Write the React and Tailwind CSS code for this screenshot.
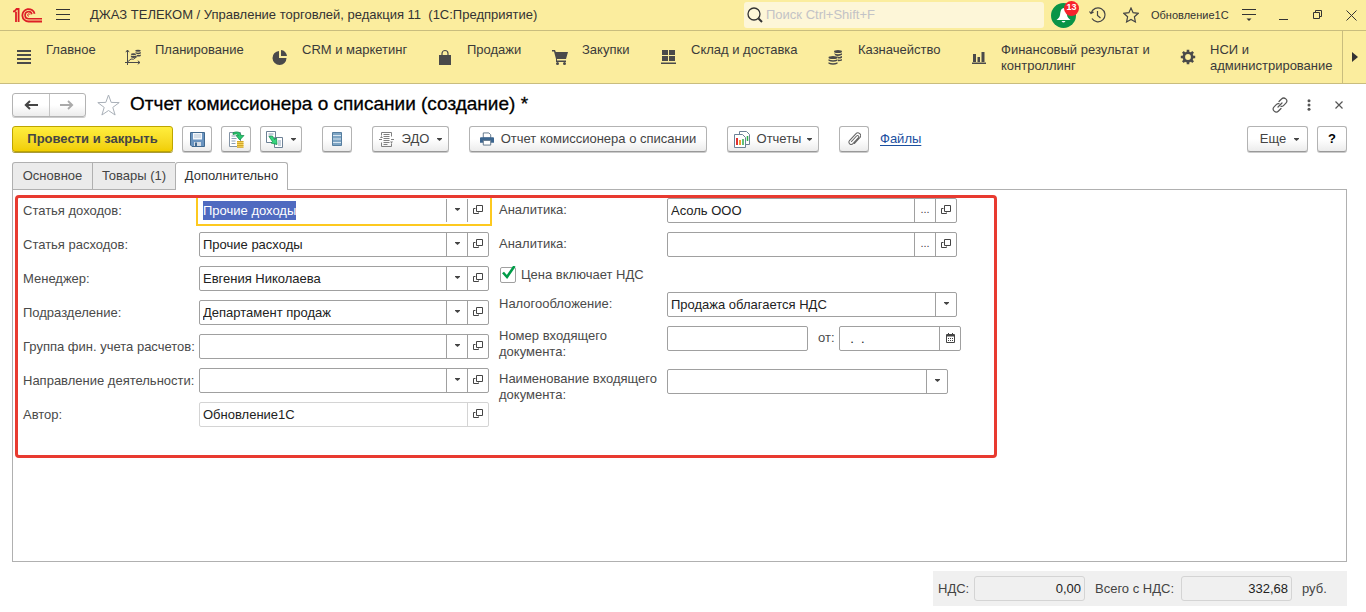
import { useEffect, useRef } from 'react'
import { clsx } from 'clsx'

const NAV = [
  { label: 'Главное', icon: 'list', width: 'w-[109px]' },
  { label: 'Планирование', icon: 'plan', width: 'w-[147px]' },
  { label: 'CRM и маркетинг', icon: 'pie', width: 'w-[165px]' },
  { label: 'Продажи', icon: 'bag', width: 'w-[115px]' },
  { label: 'Закупки', icon: 'cart', width: 'w-[109px]' },
  { label: 'Склад и доставка', icon: 'boxes', width: 'w-[167px]' },
  { label: 'Казначейство', icon: 'coins', width: 'w-[143px]' },
  { label: 'Финансовый результат и контроллинг', icon: 'bars', width: 'w-[209px]' },
  { label: 'НСИ и администрирование', icon: 'gear', width: 'w-[161px]' },
]

const NAV_ICONS = {
  list: <path d="M1 2h14M1 6h14M1 10h14M1 14h14" stroke="currentColor" strokeWidth="2" />,
  plan: (
    <g>
      <path
        d="M2.500 1v15M0 13.500h15M.8 3.200 2.500 1l1.700 2.200M12.800 11.800l2.200 1.700-2.200 1.700M3 12.500l3-2.500 2.500.2L12 7.500"
        stroke="currentColor"
        fill="none"
      />
      <g fill="currentColor">
        <ellipse cx="8.500" cy="5.200" rx="2.600" ry="1" />
        <path d="M5.900 6.400q2.600 1.400 5.200 0v1.800q-2.600 1.400-5.200 0Z" />
        <ellipse cx="13" cy="1.800" rx="2.800" ry="1" />
        <path d="M10.200 3q2.800 1.400 5.600 0v1.500q-2.300 1.200-4.500.2ZM11.700 5.800q2.200.6 4.100-.3v1.400q-2.200 1-4.100.4Z" />
      </g>
    </g>
  ),
  pie: (
    <g fill="currentColor">
      <path d="M7 2v7h7.500A7 7 0 1 1 7 2Z" />
      <path d="M9 1a6.500 6.500 0 0 1 6 6H9Z" />
    </g>
  ),
  bag: (
    <g>
      <path d="M2 6h12v10H2Z" fill="currentColor" />
      <path d="M5 8V4.500a3 3 0 0 1 6 0V8" fill="none" stroke="currentColor" strokeWidth="1.200" />
    </g>
  ),
  cart: (
    <g fill="currentColor">
      <path d="M0 1h3l.8 2H16l-2 7H5v1.500h9V13H4V10L2 2.500H0Z" />
      <circle cx="5.500" cy="14.500" r="1.500" />
      <circle cx="12.500" cy="14.500" r="1.500" />
    </g>
  ),
  boxes: <path d="M1 1h6v5H1ZM8 1h6v5H8ZM1 7h6v5H1ZM8 7h6v5H8ZM0 13.500h15V15H0Z" fill="currentColor" />,
  coins: (
    <g fill="currentColor">
      <ellipse cx="10" cy="2.500" rx="4" ry="1.500" />
      <path d="M6 4.200q4 2 8 0v1.600q-4 2-6.500.8ZM9 7.500q3 1 5-.4v1.600q-2 1.200-4 .8ZM10 10.600q3 .4 4-.6v1.500q-2 1-4 .8Z" />
      <ellipse cx="5" cy="8.500" rx="4.500" ry="1.500" />
      <path d="M.5 10.200q4.500 2 9 0v1.600q-4.500 2-9 0ZM.5 13.200q4.500 2 9 0v1.600q-4.500 2-9 0Z" />
    </g>
  ),
  bars: <path d="M2 5h3v8H2ZM6.500 8h2.500v5H6.500ZM10.500 3h3v10h-3ZM1 13.500h14V15H1Z" fill="currentColor" />,
  gear: (
    <g fill="none" stroke="currentColor">
      <circle cx="8" cy="8" r="4.200" strokeWidth="2.600" />
      <path
        d="M8 .8v2.700M8 12.500v2.700M.8 8h2.700M12.500 8h2.700M2.900 2.900l1.900 1.900M11.200 11.200l1.900 1.900M2.900 13.100l1.900-1.900M11.200 4.800l1.900-1.900"
        strokeWidth="2.600"
      />
    </g>
  ),
}

function Caret() {
  return (
    <svg width="5" height="3" viewBox="0 0 5 3" className="shrink-0">
      <path d="M0 0h5v.8L2.500 3 0 .8Z" fill="#444" />
    </svg>
  )
}

function OpenIcon() {
  return (
    <svg width="10" height="10" viewBox="0 0 10 10" fill="none" stroke="#444">
      <path d="M3.500.5h6v6h-6ZM2.500 3.500h-2v5h5V7.500" />
    </svg>
  )
}

function Logo() {
  return (
    <svg width="29" height="15" viewBox="0 0 29 15" fill="none" stroke="#dd1f26" strokeWidth="1.800" aria-label="1С">
      <path d="M0 3.400h1.500L3.600 1h2v13M3 3.800V14" />
      <path d="M21.600 5.800A6.200 6.200 0 1 0 15.600 13.500H29" />
      <path d="M18.900 6.200a3.500 3.500 0 1 0-3.300 4.500H29" strokeWidth="1.600" />
      <path d="M17 6.700a1.200 1.200 0 1 0-1.200 1.500" strokeWidth="1" />
    </svg>
  )
}

function TitleBar() {
  return (
    <header className="flex h-[31px] items-center border-b border-[#c9bd7e] pl-[13px] pr-[9px] text-[#333]">
      <Logo />
      <button aria-label="Меню" className="ml-[14px]">
        <svg width="14" height="12" viewBox="0 0 14 12" stroke="#333" strokeWidth="1">
          <path d="M0 .5h14M0 5.500h14M0 10.500h14" />
        </svg>
      </button>
      <h1 className="ml-5 whitespace-pre">
        ДЖАЗ ТЕЛЕКОМ / Управление торговлей, редакция 11  (1С:Предприятие)
      </h1>
      <label className="ml-auto flex h-[26px] w-[300px] items-center gap-[3px] rounded-[3px] bg-[#fdf6d8] pl-[3px]">
        <svg width="16" height="16" viewBox="0 0 16 16" fill="none" stroke="#333">
          <circle cx="7" cy="7" r="6" strokeWidth="1.300" />
          <path d="m11.500 11.500 3.500 3.500" strokeWidth="2" />
        </svg>
        <input
          aria-label="Поиск"
          placeholder="Поиск Ctrl+Shift+F"
          className="min-w-0 flex-1 bg-transparent outline-none placeholder:text-[#c3c3c6]"
        />
      </label>
      <button aria-label="Уведомления" className="relative ml-[7px] grid size-[25px] place-items-center rounded-full bg-[#0a9447]">
        <svg width="15" height="17" viewBox="0 0 15 17" fill="#fff">
          <path d="M7.500 1C4.500 2 4.500 5 4 8c-.4 2.500-2 3.500-3.500 5h14C13 11.500 11.400 10.500 11 8c-.5-3-.5-6-3.500-7ZM5.500 14h4q-2 3-4 0Z" />
        </svg>
        <span className="absolute -right-[3px] -top-[2px] grid size-[15px] place-items-center rounded-full bg-[#f7222c] text-[9px] font-bold text-white">
          13
        </span>
      </button>
      <button aria-label="История" className="ml-[13px]">
        <svg width="17" height="16" viewBox="0 0 17 16" fill="none" stroke="#444" strokeWidth="1.200">
          <path d="M2.200 6A7 7 0 1 1 3 11.500M.5 4.500l1.500 2L4.600 5M8.500 4v4.500l3 2.500" />
        </svg>
      </button>
      <button aria-label="Избранное" className="ml-[17px]">
        <svg width="16" height="16" viewBox="0 0 16 16" fill="none" stroke="#444" strokeWidth="1.200">
          <path d="m8 1 2.100 4.700 5.100.6-3.800 3.500 1 5.100L8 12.400l-4.400 2.500 1-5.100L.8 6.300l5.100-.6Z" />
        </svg>
      </button>
      <span className="ml-3 w-[77px] whitespace-nowrap text-[11px]">Обновление1С</span>
      <button aria-label="Настройка" className="ml-[14px]">
        <svg width="14" height="12" viewBox="0 0 14 12" fill="none" stroke="#333">
          <path d="M0 .5h14M0 5.500h14" />
          <path d="M4.500 9.500h5L7 12Z" fill="#333" stroke="none" />
        </svg>
      </button>
      <button aria-label="Свернуть" className="ml-[23px]">
        <svg width="10" height="10" viewBox="0 0 10 10" stroke="#333">
          <path d="M0 9.500h9" />
        </svg>
      </button>
      <button aria-label="Развернуть" className="ml-6">
        <svg width="10" height="10" viewBox="0 0 10 10" fill="none" stroke="#333">
          <path d="M.5 2.500h6v6h-6ZM2.500 2V.5h6v6H7" />
        </svg>
      </button>
      <button aria-label="Закрыть" className="ml-[23px]">
        <svg width="11" height="11" viewBox="0 0 11 11" stroke="#333">
          <path d="m.5.5 10 10M10.500.5l-10 10" />
        </svg>
      </button>
    </header>
  )
}

function Sections() {
  return (
    <nav className="flex h-[53px] border-b border-[#c9bd7e] pl-4 text-[#3a3a3a]">
      {NAV.map((item) => (
        <a key={item.label} href="#" className={clsx('flex gap-[14px] pt-[11px] leading-4', item.width)}>
          <svg width="16" height="16" viewBox="0 0 16 16" className="mt-[7px] shrink-0 text-[#4a4a4a]">
            {NAV_ICONS[item.icon]}
          </svg>
          <span>{item.label}</span>
        </a>
      ))}
      <button aria-label="Далее" className="ml-auto grid w-6 place-items-center border-l border-[#c9bd7e]">
        <svg width="6" height="10" viewBox="0 0 6 10">
          <path d="M0 0v10l6-5Z" fill="#333" />
        </svg>
      </button>
    </nav>
  )
}

function ToolButton({ className, children, ...rest }) {
  return (
    <button
      className={clsx(
        'flex h-[26px] items-center justify-center whitespace-nowrap rounded-[3px] border border-[#b3b3b3] border-b-[#999] bg-linear-to-b from-white from-50% to-[#ececec] text-[#444] shadow-[0_1px_0_#ccc]',
        className
      )}
      {...rest}
    >
      {children}
    </button>
  )
}

function Heading() {
  return (
    <div className="flex h-[25px] items-center">
      <div className="flex h-6 w-[74px] divide-x divide-[#c4c4c4] rounded-[3px] border border-[#b3b3b3] bg-linear-to-b from-white from-50% to-[#ececec] shadow-[0_1px_0_#ccc]">
        <button aria-label="Назад" className="grid flex-1 place-items-center">
          <svg width="14" height="10" viewBox="0 0 14 10" fill="none" stroke="#444" strokeWidth="2">
            <path d="M1.500 5H14M6 1 1.800 5 6 9" />
          </svg>
        </button>
        <button aria-label="Вперед" className="grid flex-1 place-items-center">
          <svg width="14" height="10" viewBox="0 0 14 10" fill="none" stroke="#aaa" strokeWidth="1.800">
            <path d="M0 5h12.500M8 1l4.200 4L8 9" />
          </svg>
        </button>
      </div>
      <button aria-label="В избранное" className="ml-[11px]">
        <svg width="23" height="22" viewBox="0 0 23 22" fill="none" stroke="#a9b0b8" strokeWidth="1">
          <path d="m11.500 1 2.700 7.400 8 .2-6.400 4.800 2.300 7.600-6.600-4.500L4.900 21l2.300-7.600L.8 8.600l8-.2Z" />
        </svg>
      </button>
      <h2 className="ml-[10px] text-[19px] text-black [-webkit-text-stroke:0.3px_black]">
        Отчет комиссионера о списании (создание) *
      </h2>
      <button aria-label="Ссылка" className="ml-auto">
        <svg width="16" height="16" viewBox="0 0 16 16" fill="none" stroke="#555" strokeWidth="1.200" strokeLinecap="round">
          <path d="M7 4.500 9.500 2a2.900 2.900 0 0 1 4.400 4.200L11.500 8.600a2.900 2.900 0 0 1-2.500.8M9 11.500 6.500 14a2.900 2.900 0 0 1-4.400-4.200L4.500 7.400A2.900 2.900 0 0 1 7 6.600M6 10l4-4" />
        </svg>
      </button>
      <button aria-label="Меню формы" className="ml-[19px]">
        <svg width="4" height="12" viewBox="0 0 4 12" fill="#555">
          <circle cx="2" cy="1.700" r="1.500" />
          <circle cx="2" cy="6" r="1.500" />
          <circle cx="2" cy="10.300" r="1.500" />
        </svg>
      </button>
      <button aria-label="Закрыть форму" className="ml-6 mr-1">
        <svg width="8" height="8" viewBox="0 0 8 8" stroke="#555" strokeWidth="1.200">
          <path d="m.5.5 7 7M7.500.5l-7 7" />
        </svg>
      </button>
    </div>
  )
}

function Toolbar() {
  return (
    <div className="mt-[9px] flex items-center pb-px">
      <button className="h-[26px] w-[161px] whitespace-nowrap rounded-[3px] border border-[#bda500] bg-linear-to-b from-[#ffee3c] to-[#f1ce00] font-bold text-[#444] shadow-[0_1px_0_#a99a3a]">
        Провести и закрыть
      </button>
      <ToolButton aria-label="Записать" className="ml-[9px] w-[30px]">
        <svg width="15" height="15" viewBox="0 0 15 15">
          <path d="M.5.500h14v14H2L.5 13Z" fill="#6a94c0" stroke="#41698f" />
          <path d="M3 1h9v6.500H3Z" fill="#f3f7fb" />
          <path d="M4 3h7M4 5h7" stroke="#b4c4d4" />
          <path d="M4 10h7v4H4Z" fill="#d5dde6" />
          <path d="M5 10.500h2V14H5Z" fill="#41698f" />
        </svg>
      </ToolButton>
      <ToolButton aria-label="Провести" className="ml-[9px] w-[30px]">
        <svg width="17" height="17" viewBox="0 0 17 17">
          <path d="M1.500 1.500h11v14h-11Z" fill="#fff" stroke="#8393a5" />
          <path d="M3.500 5h4M3.500 7.500h5M3.500 10h4M3.500 12.500h4" stroke="#8aa0b8" />
          <path d="M5 1.800C9 0 12.500 1 13 4.500h3L11.800 9 8 4.500h2.500C10 3 8 2.500 5 3.500Z" fill="#28c76f" stroke="#0d8a43" strokeWidth=".7" />
          <path d="M9 10h6.500v6.500H9Z" fill="#f4d35a" />
          <path d="M9 10.500h6.500M9 12.500h6.500M9 14.500h6.500M9 16.300h6.500" stroke="#c99a1e" strokeWidth=".8" />
        </svg>
      </ToolButton>
      <ToolButton aria-label="Создать на основании" className="ml-[9px] w-[42px] gap-2">
        <svg width="17" height="17" viewBox="0 0 17 17">
          <path d="M.5.500h9v11h-9ZM8.500 6.500h8v10h-8Z" fill="#fff" stroke="#6d8196" />
          <path d="M2.500 3h5M2.500 5h3M12 10h3M12 12h3M12 14h3" stroke="#8aa0b8" />
          <path d="M3 5.500 6.500 5l2 3.500 2-1.500.5 6.500-6-1.500 1.500-1.300Z" fill="#36d67f" stroke="#0d8a43" strokeWidth=".7" />
        </svg>
        <Caret />
      </ToolButton>
      <ToolButton aria-label="Структура подчиненности" className="ml-5 w-[30px]">
        <svg width="10" height="14" viewBox="0 0 10 14">
          <path d="M.5.500h9v13h-9Z" fill="#7ea5c4" stroke="#557d9f" />
          <path d="M1 3.500h8M1 7h8M1 10.500h8" stroke="#d8e6f1" />
        </svg>
      </ToolButton>
      <ToolButton className="ml-5 w-[77px]">
        <svg width="15" height="15" viewBox="0 0 15 15" fill="none" stroke="#808080" className="mr-2">
          <path d="M2.500 3.500v-3h10v4M12.500 11.500v3h-10v-4M4.500 2.500h6M4.500 4.500h6M4.500 6.500h6M4.500 8.500h6M4.500 10.500h6M4.500 12.500h4M0 7.500h3M12 7.500h3" />
          <path d="m1 6 1.500-2L4 6ZM11 9.500l1.500 2 1.500-2Z" fill="#808080" stroke="none" />
        </svg>
        <span className="mr-2">ЭДО</span>
        <Caret />
      </ToolButton>
      <ToolButton className="ml-5 w-[238px]">
        <svg width="14" height="14" viewBox="0 0 15 14" className="mr-[7px]">
          <path d="M3.500.500h6l2 2V6h-8Z" fill="#fff" stroke="#5d7287" />
          <path d="M1 5h13q1 0 1 1v5H0V6q0-1 1-1Z" fill="#3c6690" />
          <path d="M3.500 8.500h8v5h-8Z" fill="#fff" stroke="#5d7287" />
        </svg>
        Отчет комиссионера о списании
      </ToolButton>
      <ToolButton className="ml-5 w-[92px]">
        <svg width="16" height="17" viewBox="0 0 16 17" className="mr-[7px]">
          <path d="M5.500.500h7l3 3v10h-10Z" fill="#fff" stroke="#6d8196" />
          <path d="M.5 3.500h8l3 3v10H.500Z" fill="#fff" stroke="#6d8196" />
          <path d="M3 7v7" stroke="#e03030" strokeWidth="2" />
          <path d="M6 9v5" stroke="#f0a030" strokeWidth="2" />
          <path d="M9 8v6M13.500 5v5" stroke="#2fae4e" strokeWidth="1.500" />
        </svg>
        <span className="mr-[6px]">Отчеты</span>
        <Caret />
      </ToolButton>
      <ToolButton aria-label="Прикрепить" className="ml-5 w-[30px]">
        <svg width="13" height="14" viewBox="0 0 13 14" fill="none" stroke="#666" strokeWidth="1.100" strokeLinecap="round">
          <path d="M3.500 9.500 8.500 4a1.300 1.300 0 0 1 2 1.700L5 11.600A2.300 2.300 0 0 1 1.500 8.500L7.800 1.800a2.800 2.800 0 0 1 4.200 3.700L6.500 11.500" />
        </svg>
      </ToolButton>
      <a href="#" className="ml-[11px] text-[#1a4f9f] underline underline-offset-2">
        Файлы
      </a>
      <ToolButton className="ml-auto w-[61px] gap-2 pl-1">
        Еще
        <Caret />
      </ToolButton>
      <ToolButton aria-label="Справка" className="ml-[9px] w-[30px] font-bold">
        <span className="text-black">?</span>
      </ToolButton>
    </div>
  )
}

function Tabs() {
  return (
    <div role="tablist" className="relative z-10 -mb-px mt-[9px] flex">
      <button role="tab" className="h-[27px] w-[81px] rounded-tl-[3px] border border-b-0 border-[#b0b0b0] bg-[#ebebeb] text-[#444]">
        Основное
      </button>
      <button role="tab" className="h-[27px] w-[82px] border-t border-[#b0b0b0] bg-[#ebebeb] text-[#444]">
        Товары (1)
      </button>
      <button
        role="tab"
        aria-selected="true"
        className="h-7 w-[113px] rounded-t-[3px] border border-b-0 border-[#b0b0b0] bg-white pb-0.5 text-[#333]"
      >
        Дополнительно
      </button>
    </div>
  )
}

function FieldButton({ kind, muted }) {
  const titles = { drop: 'Выбрать из списка', open: 'Открыть', more: 'Выбрать', date: 'Календарь' }
  return (
    <button
      aria-label={titles[kind]}
      className={clsx(
        'grid w-[21px] shrink-0 place-items-center border-l pb-0.5 text-[#444]',
        muted ? 'border-[#d4d4d4]' : 'border-[#a0a0a0]'
      )}
    >
      {kind === 'drop' && <Caret />}
      {kind === 'open' && <OpenIcon />}
      {kind === 'more' && <span className="text-[11px]">...</span>}
      {kind === 'date' && (
        <svg width="9" height="10" viewBox="0 0 9 10">
          <path d="M.5 1.500h8v8h-8ZM2.500 0v2M6.500 0v2" fill="none" stroke="#444" />
          <path d="M1 2h7v1.500H1Z" fill="#444" />
          <path d="M2 5.500h5M2 7.500h5" stroke="#444" strokeDasharray="1 1" />
        </svg>
      )}
    </button>
  )
}

function Field({ id, value, buttons = [], width = 'w-[290px]', muted, active }) {
  const ref = useRef(null)

  useEffect(() => {
    if (active) {
      ref.current.focus()
      ref.current.select()
    }
  }, [active])

  return (
    <div
      className={clsx(
        'flex h-[25px] shrink-0 border',
        width,
        active && 'border-transparent outline-2 outline-offset-1 outline-[#fdc91f]',
        !active && 'rounded-[2px]',
        !active && (muted ? 'border-[#d4d4d4]' : 'border-[#a0a0a0]')
      )}
    >
      <input
        ref={ref}
        id={id}
        defaultValue={value}
        readOnly={muted}
        className="min-w-0 flex-1 bg-transparent px-[3px] text-[#222] outline-none selection:bg-[#4f6ac0] selection:text-white"
      />
      {buttons.map((b) => (
        <FieldButton key={b} kind={b} muted={muted} />
      ))}
    </div>
  )
}

const LEFT = [
  { id: 'income', label: 'Статья доходов:', value: 'Прочие доходы', buttons: ['drop', 'open'], active: true },
  { id: 'expense', label: 'Статья расходов:', value: 'Прочие расходы', buttons: ['drop', 'open'] },
  { id: 'manager', label: 'Менеджер:', value: 'Евгения Николаева', buttons: ['drop', 'open'] },
  { id: 'department', label: 'Подразделение:', value: 'Департамент продаж', buttons: ['drop', 'open'] },
  { id: 'group', label: 'Группа фин. учета расчетов:', value: '', buttons: ['drop', 'open'] },
  { id: 'activity', label: 'Направление деятельности:', value: '', buttons: ['drop', 'open'] },
  { id: 'author', label: 'Автор:', value: 'Обновление1С', buttons: ['open'], muted: true },
]

function RightRow({ id, label, tall, children }) {
  return (
    <div className="flex items-start">
      <label htmlFor={id} className={clsx('w-[168px] shrink-0 leading-4', tall ? 'pt-0.5' : 'pt-1')}>
        {label}
      </label>
      {children}
    </div>
  )
}

function ExtraForm() {
  return (
    <div className="relative ml-[2px] mt-[5px] flex h-[263px] w-[982px] gap-[10px] pl-2 pt-[3px] text-[#4a4a4a]">
      <div className="flex flex-col gap-[9px]">
        {LEFT.map(({ label, ...field }) => (
          <div key={field.id} className="flex items-center">
            <label htmlFor={field.id} className="w-44 whitespace-nowrap">
              {label}
            </label>
            <Field {...field} />
          </div>
        ))}
      </div>
      <div className="flex flex-col gap-[9px]">
        <RightRow id="analytics1" label="Аналитика:">
          <Field id="analytics1" value="Асоль ООО" buttons={['more', 'open']} />
        </RightRow>
        <RightRow id="analytics2" label="Аналитика:">
          <Field id="analytics2" value="" buttons={['more', 'open']} />
        </RightRow>
        <label className="flex h-[17px] items-center gap-[5px]">
          <span className="relative ml-px size-4">
            <input
              type="checkbox"
              defaultChecked
              className="peer block size-4 appearance-none rounded-[2px] border border-[#a0a0a0] bg-white"
            />
            <svg
              width="16"
              height="16"
              viewBox="0 0 16 16"
              fill="none"
              stroke="#009c48"
              strokeWidth="2.600"
              className="pointer-events-none absolute -top-px left-px hidden peer-checked:block"
            >
              <path d="m2 6.500 4 4.500L13.500 0" />
            </svg>
          </span>
          Цена включает НДС
        </label>
        <RightRow id="tax" label="Налогообложение:">
          <div className="relative flex h-[25px] w-[290px] rounded-[2px] border border-[#a0a0a0]">
            <select id="tax" className="w-full appearance-none bg-transparent px-[3px] text-[#222] outline-none">
              <option>Продажа облагается НДС</option>
            </select>
            <span className="pointer-events-none absolute inset-y-0 right-0 grid w-[21px] place-items-center border-l border-[#a0a0a0] pb-0.5">
              <Caret />
            </span>
          </div>
        </RightRow>
        <RightRow id="number" label="Номер входящего документа:" tall>
          <Field id="number" value="" width="w-[141px]" />
          <label htmlFor="date" className="w-[31px] pl-[10px] pt-1 leading-4">
            от:
          </label>
          <Field id="date" value="  .  ." width="w-[122px]" buttons={['date']} />
        </RightRow>
        <RightRow id="name" label="Наименование входящего документа:" tall>
          <Field id="name" value="" width="w-[281px]" buttons={['drop']} />
        </RightRow>
      </div>
      <div className="pointer-events-none absolute inset-0 rounded-[4px] border-3 border-[#e83a30]" />
    </div>
  )
}

function Totals() {
  const box =
    'h-[25px] w-[111px] rounded-[3px] border border-[#d4d4d4] bg-transparent px-[3px] text-right text-[#222] outline-none'
  return (
    <footer className="mb-[6px] ml-auto mt-[9px] flex h-[35px] w-[414px] items-center bg-[#f0f0f0] pl-[5px] text-[#444]">
      <label htmlFor="vat" className="w-9">
        НДС:
      </label>
      <input id="vat" readOnly defaultValue="0,00" className={box} />
      <label htmlFor="total" className="ml-[10px] w-[86px] whitespace-nowrap">
        Всего с НДС:
      </label>
      <input id="total" readOnly defaultValue="332,68" className={box} />
      <span className="ml-[10px]">руб.</span>
    </footer>
  )
}

export default function App() {
  return (
    <div className="flex min-h-screen flex-col bg-white font-['Liberation_Sans',Arial,sans-serif] text-[13px]">
      <div className="bg-[#fbed9e]">
        <TitleBar />
        <Sections />
      </div>
      <main className="flex flex-1 flex-col pl-3 pr-[19px] pt-2">
        <Heading />
        <Toolbar />
        <Tabs />
        <section className="flex-1 border border-[#b0b0b0]">
          <ExtraForm />
        </section>
        <Totals />
      </main>
    </div>
  )
}
